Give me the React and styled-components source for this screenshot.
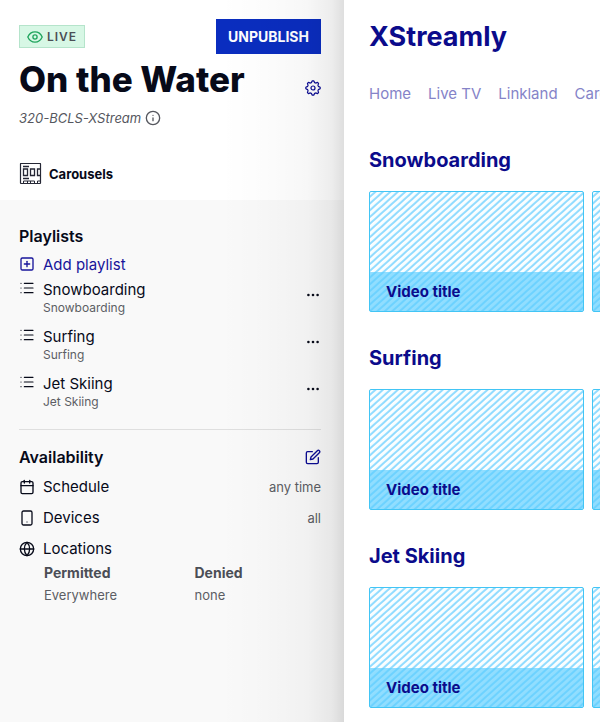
import React from 'react';
import styled, { createGlobalStyle } from 'styled-components';
import { Info, SquarePlus, List, Calendar, Globe } from 'lucide-react';
import { FiEdit } from 'react-icons/fi';

const Global = createGlobalStyle`
  *, *::before, *::after { box-sizing: border-box; }
  body { margin: 0; background: #fff; font-family: Inter, "Liberation Sans", sans-serif; color: #070a19; overflow-x: hidden; }
  button { font: inherit; border: 0; padding: 0; background: none; cursor: pointer; }
  h1, h2, h3, p, ul, dl, dd { margin: 0; padding: 0; }
  ul { list-style: none; }
`;

const Page = styled.div`
  display: flex;
  min-height: 100vh;
`;

const Sidebar = styled.aside`
  flex: 0 0 344px;
  position: relative;
  display: flex;
  flex-direction: column;
  background: #fff;

  &::after {
    content: "";
    position: absolute;
    inset: 0 0 0 auto;
    width: 124px;
    pointer-events: none;
    background: linear-gradient(to right, rgba(0, 0, 0, 0) 0%, rgba(0, 0, 0, 0.01) 35%, rgba(0, 0, 0, 0.03) 70%, rgba(0, 0, 0, 0.07) 90%, rgba(0, 0, 0, 0.13) 100%);
  }
`;

const SidebarHeader = styled.header`
  padding: 19px 23px 0 19px;
`;

const Row = styled.div`
  display: flex;
  align-items: center;
  justify-content: space-between;
`;

const LiveBadge = styled.span`
  display: inline-flex;
  align-items: center;
  gap: 4px;
  height: 23px;
  padding: 0 7px;
  border: 1px solid #b5e4cb;
  background: #d7f7e5;
  color: #4b4e56;
  font-size: 12px;
  font-weight: 600;
  letter-spacing: 1px;
`;

const UnpublishButton = styled.button`
  && {
    height: 35px;
    padding: 0 12px;
    background: #0a2dbf;
    color: #fff;
    font-size: 14px;
    font-weight: 700;
  }
`;

const IconButton = styled.button`
  display: flex;
  color: #0b0b93;
`;

const OptionsButton = styled(IconButton)`
  && { align-self: start; padding-top: 7px; color: #070a19; }
`;

const TitleRow = styled(Row)`
  height: 50px;
  align-items: flex-end;

  ${IconButton} { padding-bottom: 8px; }
`;

const Title = styled.h1`
  font-size: 35px;
  line-height: 50px;
  font-weight: 800;
  white-space: nowrap;
`;

const StreamId = styled.p`
  display: flex;
  align-items: center;
  gap: 4px;
  height: 28px;
  color: #55575e;
  font-size: 13px;
  font-style: italic;
`;

const Section = styled.div`
  display: flex;
  align-items: center;
  gap: 6px;
  height: 53px;
  font-size: 13px;
  line-height: 20px;
  font-weight: 700;
  margin-top: 15px;
`;

const SidebarBody = styled.div`
  flex: 1;
  padding: 24px 23px 24px 19px;
  background: #f9f9f9;
`;

const Heading = styled.h2`
  font-size: 16px;
  line-height: 24px;
  font-weight: 600;
`;

const AddButton = styled.button`
  display: flex;
  align-items: center;
  gap: 8px;
  height: 32px;
  && { color: #17149a; font-size: 15px; }
`;

const PlaylistList = styled.ul`
  display: grid;
  grid-auto-rows: minmax(47px, auto);
`;

const PlaylistItem = styled.li`
  display: grid;
  grid-template-columns: 16px 1fr auto;
  column-gap: 8px;
`;

const PlaylistName = styled.p`
  font-size: 15px;
  line-height: 20px;
`;

const PlaylistSource = styled.p`
  color: #5c5e64;
  font-size: 12px;
  line-height: 16px;
`;

const Divider = styled.hr`
  width: 100%;
  margin: 8px 0 15px;
  border: 0;
  border-top: 1px solid #dfdfdf;
`;

const SettingList = styled.div`
  padding-top: 2px;
`;

const Setting = styled.div`
  display: grid;
  grid-template-columns: 16px 1fr auto;
  align-items: center;
  column-gap: 8px;
  height: 31px;
  font-size: 15px;
`;

const Value = styled.span`
  color: #5c5e64;
  font-size: 13px;
`;

const Locations = styled.dl`
  display: grid;
  grid-template-columns: 1fr 1fr;
  padding-left: 25px;
  column-gap: 24px;
`;

const Term = styled.dt`
  color: #4b4e56;
  font-size: 14px;
  line-height: 18px;
  font-weight: 700;
`;

const Detail = styled.dd`
  color: #5c5e64;
  font-size: 13px;
  line-height: 26px;
`;

const Preview = styled.main`
  flex: 1;
  min-width: 0;
  padding: 17px 0 15px 25px;
  overflow: hidden;
  color: #0b0b8b;
`;

const Brand = styled.h2`
  font-size: 27px;
  line-height: 40px;
  font-weight: 700;
`;

const Nav = styled.nav`
  display: flex;
  gap: 17px;
  margin: 26px 0 41px;
  line-height: 21px;
  font-size: 15px;
  white-space: nowrap;
`;

const NavLink = styled.a`
  color: #8583c8;
  text-decoration: none;
`;

const Carousel = styled.section`
  margin-bottom: 31px;
  &:last-child { margin-bottom: 0; }
`;

const CarouselTitle = styled.h3`
  font-size: 20px;
  line-height: 30px;
  font-weight: 700;
  margin-bottom: 16px;
`;

const Track = styled.div`
  display: flex;
  gap: 8px;
`;

const Card = styled.article`
  flex: 0 0 215px;
  height: 121px;
  display: flex;
  flex-direction: column;
  justify-content: flex-end;
  border: 1px solid #42c5f5;
  border-radius: 2px;
  background: repeating-linear-gradient(138deg, #fff 0, #f4fcff 2px, #92dcff 3px, #92dcff 4px, #fff 5px);
`;

const CardTitle = styled.p`
  height: 39px;
  padding-left: 16px;
  background: rgba(90, 205, 255, 0.66);
  font-size: 15px;
  line-height: 39px;
  font-weight: 700;
`;

const EyeIcon = () => (
  <svg width="16" height="16" viewBox="0 0 16 16" fill="none" stroke="#1ea45c" aria-hidden="true">
    <path d="M.8 8C3.8 1.2 12.2 1.2 15.2 8C12.2 14.8 3.8 14.8.8 8Z" strokeWidth="1.3" />
    <circle cx="8" cy="8" r="2.1" strokeWidth="1.3" />
  </svg>
);

const CarouselIcon = () => (
  <svg width="24" height="22" viewBox="0 0 24 22" fill="none" stroke="#252735" aria-hidden="true">
    <rect x="1.5" y=".5" width="20" height="20" rx=".5" strokeWidth="1.2" />
    <path d="M4.5 6H8.5V12.5H4.5ZM11.5 6H15.5V12.5H11.5ZM21.5 6H18.5V12.5H21.5" strokeWidth="1.3" />
    <path d="M4 3.5H10M4 15.5H10" strokeWidth="1.6" />
    <path d="M4.5 20V18H15.5V20M8.5 18V20M11.5 18V20M18.5 20V18H21.5" />
  </svg>
);

const DeviceIcon = () => (
  <svg width="16" height="16" viewBox="0 0 16 16" fill="none" stroke="currentColor" aria-hidden="true">
    <rect x="3" y="1" width="10" height="14" rx="1.5" strokeWidth="1.3" />
    <path d="M7.5 12H8.5" strokeWidth="1.2" />
  </svg>
);

const DotsIcon = () => (
  <svg width="16" height="16" viewBox="0 0 16 16" fill="currentColor" aria-hidden="true">
    <circle cx="3.4" cy="8" r="1.3" />
    <circle cx="8" cy="8" r="1.3" />
    <circle cx="12.6" cy="8" r="1.3" />
  </svg>
);

// Eight-lobed gear outline, generated from alternating outer and inner points.
const gearPoints = Array.from({ length: 32 }, (_, i) => {
  const angle = ((i - 0.5) / 32) * Math.PI * 2;
  const radius = i % 4 < 2 ? 7.2 : 5.6;
  return `${(8 + radius * Math.sin(angle)).toFixed(2)},${(8 - radius * Math.cos(angle)).toFixed(2)}`;
}).join(' ');

const GearIcon = () => (
  <svg width="16" height="16" viewBox="0 0 16 16" fill="none" stroke="currentColor" strokeWidth="1.2" strokeLinejoin="round" aria-hidden="true">
    <polygon points={gearPoints} />
    <circle cx="8" cy="8" r="2" />
  </svg>
);

const playlists = ['Snowboarding', 'Surfing', 'Jet Skiing'];
const links = ['Home', 'Live TV', 'Linkland', 'Carousels'];

export default function App() {
  return (
    <>
      <Global />
      <Page>
        <Sidebar>
          <SidebarHeader>
            <Row>
              <LiveBadge><EyeIcon />LIVE</LiveBadge>
              <UnpublishButton type="button">UNPUBLISH</UnpublishButton>
            </Row>
            <TitleRow>
              <Title>On the Water</Title>
              <IconButton type="button" aria-label="Settings"><GearIcon /></IconButton>
            </TitleRow>
            <StreamId>320-BCLS-XStream<Info size={16} /></StreamId>
            <Section><CarouselIcon />Carousels</Section>
          </SidebarHeader>
          <SidebarBody>
            <Heading>Playlists</Heading>
            <AddButton type="button"><SquarePlus size={16} />Add playlist</AddButton>
            <PlaylistList>
              {playlists.map((name) => (
                <PlaylistItem key={name}>
                  <List size={16} strokeWidth={1.8} />
                  <div>
                    <PlaylistName>{name}</PlaylistName>
                    <PlaylistSource>{name}</PlaylistSource>
                  </div>
                  <OptionsButton type="button" aria-label={`${name} options`}><DotsIcon /></OptionsButton>
                </PlaylistItem>
              ))}
            </PlaylistList>
            <Divider />
            <Row>
              <Heading>Availability</Heading>
              <IconButton type="button" aria-label="Edit availability"><FiEdit size={16} /></IconButton>
            </Row>
            <SettingList>
              <Setting><Calendar size={16} /><span>Schedule</span><Value>any time</Value></Setting>
              <Setting><DeviceIcon /><span>Devices</span><Value>all</Value></Setting>
              <Setting><Globe size={16} /><span>Locations</span></Setting>
            </SettingList>
            <Locations>
              <div><Term>Permitted</Term><Detail>Everywhere</Detail></div>
              <div><Term>Denied</Term><Detail>none</Detail></div>
            </Locations>
          </SidebarBody>
        </Sidebar>
        <Preview>
          <Brand>XStreamly</Brand>
          <Nav>{links.map((link) => <NavLink key={link} href="#">{link}</NavLink>)}</Nav>
          {playlists.map((name) => (
            <Carousel key={name}>
              <CarouselTitle>{name}</CarouselTitle>
              <Track>
                <Card><CardTitle>Video title</CardTitle></Card>
                <Card><CardTitle>Video title</CardTitle></Card>
              </Track>
            </Carousel>
          ))}
        </Preview>
      </Page>
    </>
  );
}
